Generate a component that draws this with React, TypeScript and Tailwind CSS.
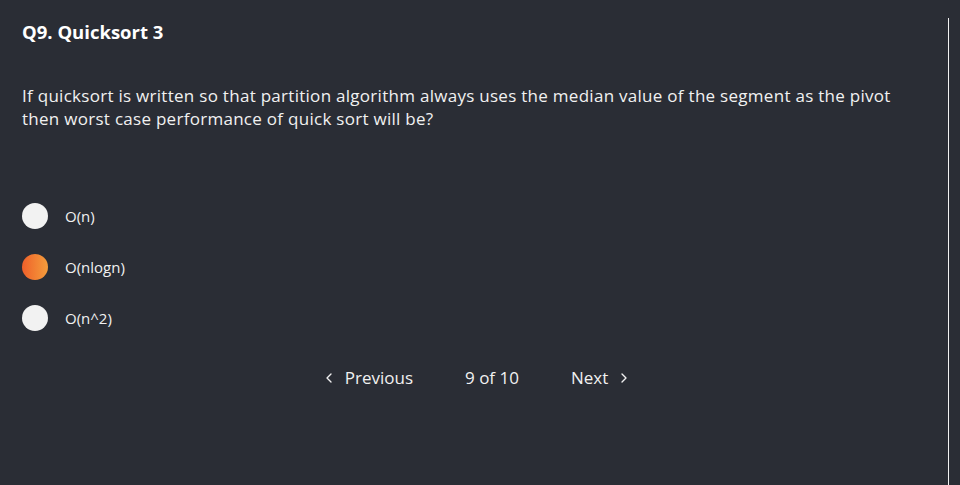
import { ChevronLeft, ChevronRight } from 'lucide-react';

const options = [
  { label: 'O(n)', selected: false },
  { label: 'O(nlogn)', selected: true },
  { label: 'O(n^2)', selected: false },
];

const App = () => {
  return (
    <div className="w-[960px] h-[485px] bg-[#2a2d35] text-[#f1f1f1] overflow-hidden font-['Open_Sans',sans-serif]">
      <div className="flex h-full">
        <div className="w-[948px] pl-[22px] pr-6 pt-[20px]">
          <h2 className="text-[18.5px] font-bold leading-[24px] text-white">Q9. Quicksort 3</h2>

          <p className="mt-[40px] text-[17px] leading-[23px] tracking-[0.28px]">
            If quicksort is written so that partition algorithm always uses the median value of the segment as the pivot
            <br />
            then worst case performance of quick sort will be?
          </p>

          <div className="mt-[73px] flex flex-col gap-[25px]">
            {options.map((opt) => (
              <div key={opt.label} className="flex items-center h-[26px]">
                <div
                  className={
                    opt.selected
                      ? 'w-[26px] h-[26px] rounded-full bg-gradient-to-r from-[#ee5f2a] to-[#f49d3c]'
                      : 'w-[26px] h-[26px] rounded-full bg-[#f2f2f2]'
                  }
                />
                <span className="ml-[17px] text-[15px]">{opt.label}</span>
              </div>
            ))}
          </div>

          <div className="mt-[34px] flex items-center justify-center text-[17px] pl-[7px]">
            <button className="flex items-center gap-[8px] text-[#f1f1f1]">
              <ChevronLeft size={16} strokeWidth={2} />
              Previous
            </button>
            <span className="mx-[52px]">9 of 10</span>
            <button className="flex items-center gap-[8px] text-[#f1f1f1]">
              Next
              <ChevronRight size={16} strokeWidth={2} />
            </button>
          </div>
        </div>
        <div className="mt-[18px] w-px bg-[#f1f1f1]" />
      </div>
    </div>
  );
};

export default App;
